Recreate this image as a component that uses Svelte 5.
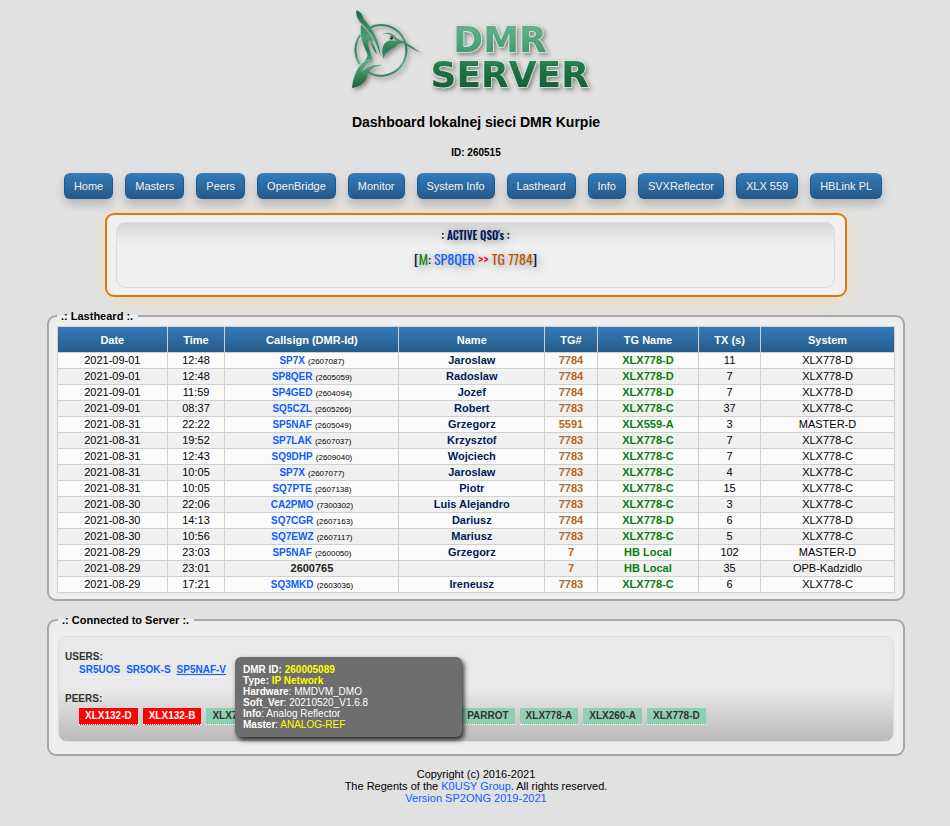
<script>
  const menu = ['Home', 'Masters', 'Peers', 'OpenBridge', 'Monitor', 'System Info', 'Lastheard', 'Info', 'SVXReflector', 'XLX 559', 'HBLink PL'];

  const columns = [
    ['Date', 13.1], ['Time', 6.9], ['Callsign (DMR-Id)', 20.8], ['Name', 17.4],
    ['TG#', 6.3], ['TG Name', 12.1], ['TX (s)', 7.4], ['System', 16]
  ];

  const heard = [
    ['2021-09-01', '12:48', 'SP7X', '2607087', 'Jaroslaw', '7784', 'XLX778-D', '11', 'XLX778-D'],
    ['2021-09-01', '12:48', 'SP8QER', '2605059', 'Radoslaw', '7784', 'XLX778-D', '7', 'XLX778-D'],
    ['2021-09-01', '11:59', 'SP4GED', '2604094', 'Jozef', '7784', 'XLX778-D', '7', 'XLX778-D'],
    ['2021-09-01', '08:37', 'SQ5CZL', '2605266', 'Robert', '7783', 'XLX778-C', '37', 'XLX778-C'],
    ['2021-08-31', '22:22', 'SP5NAF', '2605049', 'Grzegorz', '5591', 'XLX559-A', '3', 'MASTER-D'],
    ['2021-08-31', '19:52', 'SP7LAK', '2607037', 'Krzysztof', '7783', 'XLX778-C', '7', 'XLX778-C'],
    ['2021-08-31', '12:43', 'SQ9DHP', '2609040', 'Wojciech', '7783', 'XLX778-C', '7', 'XLX778-C'],
    ['2021-08-31', '10:05', 'SP7X', '2607077', 'Jaroslaw', '7783', 'XLX778-C', '4', 'XLX778-C'],
    ['2021-08-31', '10:05', 'SQ7PTE', '2607138', 'Piotr', '7783', 'XLX778-C', '15', 'XLX778-C'],
    ['2021-08-30', '22:06', 'CA2PMO', '7300302', 'Luis Alejandro', '7783', 'XLX778-C', '3', 'XLX778-C'],
    ['2021-08-30', '14:13', 'SQ7CGR', '2607163', 'Dariusz', '7784', 'XLX778-D', '6', 'XLX778-D'],
    ['2021-08-30', '10:56', 'SQ7EWZ', '2607117', 'Mariusz', '7783', 'XLX778-C', '5', 'XLX778-C'],
    ['2021-08-29', '23:03', 'SP5NAF', '2600050', 'Grzegorz', '7', 'HB Local', '102', 'MASTER-D'],
    ['2021-08-29', '23:01', '', '2600765', '', '7', 'HB Local', '35', 'OPB-Kadzidlo'],
    ['2021-08-29', '17:21', 'SQ3MKD', '2603036', 'Ireneusz', '7783', 'XLX778-C', '6', 'XLX778-C']
  ];

  const peers = [
    ['XLX132-D', true], ['XLX132-B', true], ['XLX778-B', false], ['XLX778-C', false], ['XLX559-A', false],
    ['XLX559-B', false], ['PARROT', false], ['XLX778-A', false], ['XLX260-A', false], ['XLX778-D', false]
  ];
</script>

<div class="page">
  <header>
    <svg class="logo" viewBox="0 0 810 300" role="img" aria-label="DMR Server">
      <defs>
        <linearGradient id="bird" gradientUnits="userSpaceOnUse" x1="0" y1="30" x2="0" y2="265">
          <stop offset="0" stop-color="#1b6843" />
          <stop offset=".35" stop-color="#4c9f76" />
          <stop offset=".5" stop-color="#277a50" />
          <stop offset=".68" stop-color="#5bab83" />
          <stop offset="1" stop-color="#125f36" />
        </linearGradient>
        <linearGradient id="word" gradientUnits="userSpaceOnUse" x1="0" y1="90" x2="0" y2="262">
          <stop offset="0" stop-color="#5fae89" />
          <stop offset=".45" stop-color="#42966c" />
          <stop offset=".62" stop-color="#227849" />
          <stop offset="1" stop-color="#176038" />
        </linearGradient>
        <filter id="shade" x="-20%" y="-20%" width="150%" height="150%">
          <feDropShadow dx="6" dy="7" stdDeviation="6" flood-color="#333" flood-opacity=".5" />
        </filter>
      </defs>
      <g filter="url(#shade)">
        <path d="M83 85A76 76 0 1 1 76 213M56 192A76 76 0 0 1 58 105" fill="none" stroke="url(#bird)" stroke-width="6" />
        <g fill="url(#bird)">
          <path d="M46 31C57 33 65 44 68 58C93 83 115 118 120 174C112 136 91 99 69 78C52 63 44 49 46 31Z" />
          <path d="M60 74C78 90 92 111 96 126C91 120 84 119 80 124C82 145 90 158 94 179C85 177 77 180 65 187C75 179 81 171 79 161C73 145 54 113 60 74Z" />
          <path d="M88 120C98 132 105 147 108 164C99 153 91 139 88 120Z" />
          <path d="M94 180C60 179 40 212 33 264C60 261 80 240 79 226C83 210 98 200 123 195C99 192 75 202 62 218C67 201 79 189 94 180Z" />
          <path d="M121 105C130 96 150 95 161 107C166 116 177 120 187 124C197 129 218 143 238 158C217 148 201 139 190 131C178 128 169 133 162 141C151 149 134 153 128 177C119 153 124 128 143 122C151 121 159 124 166 123C157 116 153 106 143 103C135 100 127 102 121 105Z" />
        </g>
        <circle cx="151" cy="114" r="5" fill="#202020" />
        <circle cx="149" cy="112" r="1.5" fill="#eee" />
      </g>
      <g filter="url(#shade)" class="word">
        <text x="477" y="156">DMR</text>
        <text x="506" y="261">SERVER</text>
      </g>
    </svg>
    <h1>Dashboard lokalnej sieci DMR Kurpie</h1>
    <p class="id">ID: 260515</p>
  </header>

  <nav>
    {#each menu as item}
      <a href="#{item}">{item}</a>
    {/each}
  </nav>

  <section class="qso">
    <div class="qso-inner">
      <h2>: ACTIVE QSO's :</h2>
      <p>[<span class="green">M</span>: <span class="blue">SP8QER</span> <span class="red">&gt;&gt;</span> <span class="brown">TG 7784</span>]</p>
    </div>
  </section>

  <fieldset class="lastheard">
    <legend>.: Lastheard :.</legend>
    <table>
      <colgroup>
        {#each columns as [, width]}
          <col style:width="{width}%" />
        {/each}
      </colgroup>
      <thead>
        <tr>
          {#each columns as [name]}
            <th scope="col">{name}</th>
          {/each}
        </tr>
      </thead>
      <tbody>
        {#each heard as [date, time, call, id, name, tg, tgName, tx, system]}
          <tr>
            <td>{date}</td>
            <td>{time}</td>
            <td>
              {#if call}<a class="call" href="#{call}">{call}</a> <small>({id})</small>{:else}<b>{id}</b>{/if}
            </td>
            <td class="name">{name}</td>
            <td class="tg">{tg}</td>
            <td class="tgname">{tgName}</td>
            <td>{tx}</td>
            <td>{system}</td>
          </tr>
        {/each}
      </tbody>
    </table>
  </fieldset>

  <fieldset class="connected">
    <legend>.: Connected to Server :.</legend>
    <div class="panel">
      <h3>USERS:</h3>
      <div class="users">
        <a href="#SR5UOS">SR5UOS</a>
        <a href="#SR5OK-S">SR5OK-S</a>
        <span class="hovered">
          <a class="active" href="#SP5NAF-V" aria-describedby="tip">SP5NAF-V</a>
          <span class="tip" id="tip" role="tooltip">
            <b>DMR ID: <i>260005089</i></b><br />
            <b>Type: <i>IP Network</i></b><br />
            <b>Hardware</b>: MMDVM_DMO<br />
            <b>Soft_Ver</b>: 20210520_V1.6.8<br />
            <b>Info</b>: Analog Reflector<br />
            <b>Master</b>: <i>ANALOG-REF</i>
          </span>
        </span>
      </div>
      <h3>PEERS:</h3>
      <div class="peers">
        {#each peers as [name, down]}
          <span class:down>{name}</span>
        {/each}
      </div>
    </div>
  </fieldset>

  <footer>
    Copyright (c) 2016-2021<br />
    The Regents of the <a href="#k0usy">K0USY Group</a>. All rights reserved.<br />
    <a href="#version">Version SP2ONG 2019-2021</a>
  </footer>
</div>

<style>
  :global(body) {
    margin: 0;
    background: #e1e1e1;
  }
  .page {
    font: 11px/12px 'Liberation Sans', Arial, sans-serif;
    color: #000;
    padding: 0 45px 22px 47px;
  }
  a {
    color: #0d5eff;
    text-decoration: none;
  }
  header {
    text-align: center;
  }
  .logo {
    display: block;
    width: 270px;
    height: 100px;
    margin: 0 auto;
  }
  .word text {
    font: bold 108px 'DejaVu Sans', sans-serif;
    text-anchor: middle;
    fill: url(#word);
    stroke: #d5e4dc;
    stroke-width: 5px;
    paint-order: stroke;
  }
  h1 {
    margin: 12px 0 0;
    font-size: 14px;
    line-height: 20px;
  }
  .id {
    margin: 15px 0 14px;
    font-size: 10px;
    font-weight: bold;
  }
  nav {
    display: flex;
    flex-wrap: wrap;
    justify-content: center;
    gap: 12px;
    padding-right: 6px;
  }
  nav a {
    box-sizing: border-box;
    height: 26px;
    padding: 0 9px;
    border: 1px solid #1a5a94;
    border-top-color: #3d7db5;
    border-radius: 6px;
    background: linear-gradient(#337ab7, #265a88);
    box-shadow: 0 5px 10px rgba(0, 0, 0, .2);
    color: #f2f2f2;
    line-height: 24px;
  }
  .qso {
    margin: 14px 58px 0;
    padding: 7px 10px 7px 9px;
    border: 2px solid #d87a10;
    border-radius: 9px;
    background: #f0f0f0;
    box-shadow: 0 2px 16px rgba(255, 215, 160, .6);
  }
  .qso-inner {
    box-sizing: border-box;
    height: 66px;
    padding-top: 4px;
    border: 1px solid #dcdcdc;
    border-radius: 9px;
    background: linear-gradient(#d6d6d6, #f0f0f0 22px);
    color: #001a5c;
    font-family: Oswald, 'Liberation Sans Narrow', 'DejaVu Sans Condensed', sans-serif;
    text-align: center;
    text-shadow: 2px 2px 8px rgba(0, 0, 0, .4);
  }
  h2 {
    margin: 0;
    font-size: 11px;
    font-weight: 600;
    line-height: 16px;
  }
  .qso p {
    margin: 6px 0 0;
    font-size: 14px;
    font-weight: 400;
    line-height: 20px;
  }
  .green { color: #0a820a; }
  .blue { color: #0d5eff; }
  .red { color: #f00; }
  .brown { color: #b25a0c; }

  fieldset {
    min-width: 0;
    margin: 0;
    border: 2px solid #a6a6a6;
    border-radius: 9px;
    background: #eee;
  }
  legend {
    padding: 0 5px 0 4px;
    font-weight: bold;
    line-height: 14px;
  }
  .lastheard {
    margin-top: 12px;
    padding: 3px 8px 6px;
  }
  table {
    width: 100%;
    border-collapse: collapse;
    table-layout: fixed;
    text-align: center;
  }
  th, td {
    padding: 0;
    border: 1px solid #d0d0d0;
  }
  th {
    height: 25px;
    color: #fff;
  }
  thead {
    background: linear-gradient(#337ab7, #265a88);
  }
  td {
    height: 15px;
    line-height: 13px;
  }
  tbody tr {
    background: #f0f0f0;
  }
  tbody tr:nth-child(odd) {
    background: #fbfbfb;
  }
  .call {
    font-size: 10px;
    font-weight: bold;
  }
  small {
    font-size: 8px;
  }
  td b { color: #222; }
  .name { color: #001a5c; font-weight: bold; }
  .tg { color: #b5651d; font-weight: bold; }
  .tgname { color: #087f08; font-weight: bold; }

  .connected {
    margin-top: 12px;
    padding: 9px 9px 12px;
  }
  .panel {
    box-sizing: border-box;
    height: 106px;
    padding: 14px 6px 0;
    border: 1px solid #dcdcdc;
    border-radius: 9px;
    background: linear-gradient(#e9e9e9 50%, #bbb9ba);
  }
  h3 {
    margin: 0;
    color: #333;
    font-size: 10px;
    line-height: 12px;
  }
  .users, .peers {
    display: flex;
    align-items: flex-start;
    gap: 6px;
    padding-left: 14px;
    font-size: 10px;
    font-weight: bold;
  }
  .users {
    height: 30px;
    line-height: 14px;
  }
  .users a {
    display: block;
    border-bottom: 1px dotted #fff;
  }
  .users .active {
    text-decoration: underline;
  }
  .hovered {
    position: relative;
  }
  .tip {
    position: absolute;
    z-index: 1;
    top: -6px;
    left: 100%;
    box-sizing: border-box;
    width: 227px;
    margin-left: 9px;
    padding: 7px 8px;
    border-radius: 6px;
    background: #6e6e6e;
    box-shadow: 2px 3px 5px rgba(0, 0, 0, .8);
    color: #fff;
    font-weight: normal;
    line-height: 11px;
  }
  .tip i {
    color: #ff0;
    font-style: normal;
  }
  .peers {
    gap: 5px;
    padding-top: 3px;
  }
  .peers span {
    padding: 0 6px;
    border-bottom: 1px dotted #fff;
    background: #8fceb1;
    color: #333;
    line-height: 16px;
  }
  .peers .down {
    background: #f00;
    color: #fff;
  }
  footer {
    margin-top: 12px;
    text-align: center;
  }
</style>
